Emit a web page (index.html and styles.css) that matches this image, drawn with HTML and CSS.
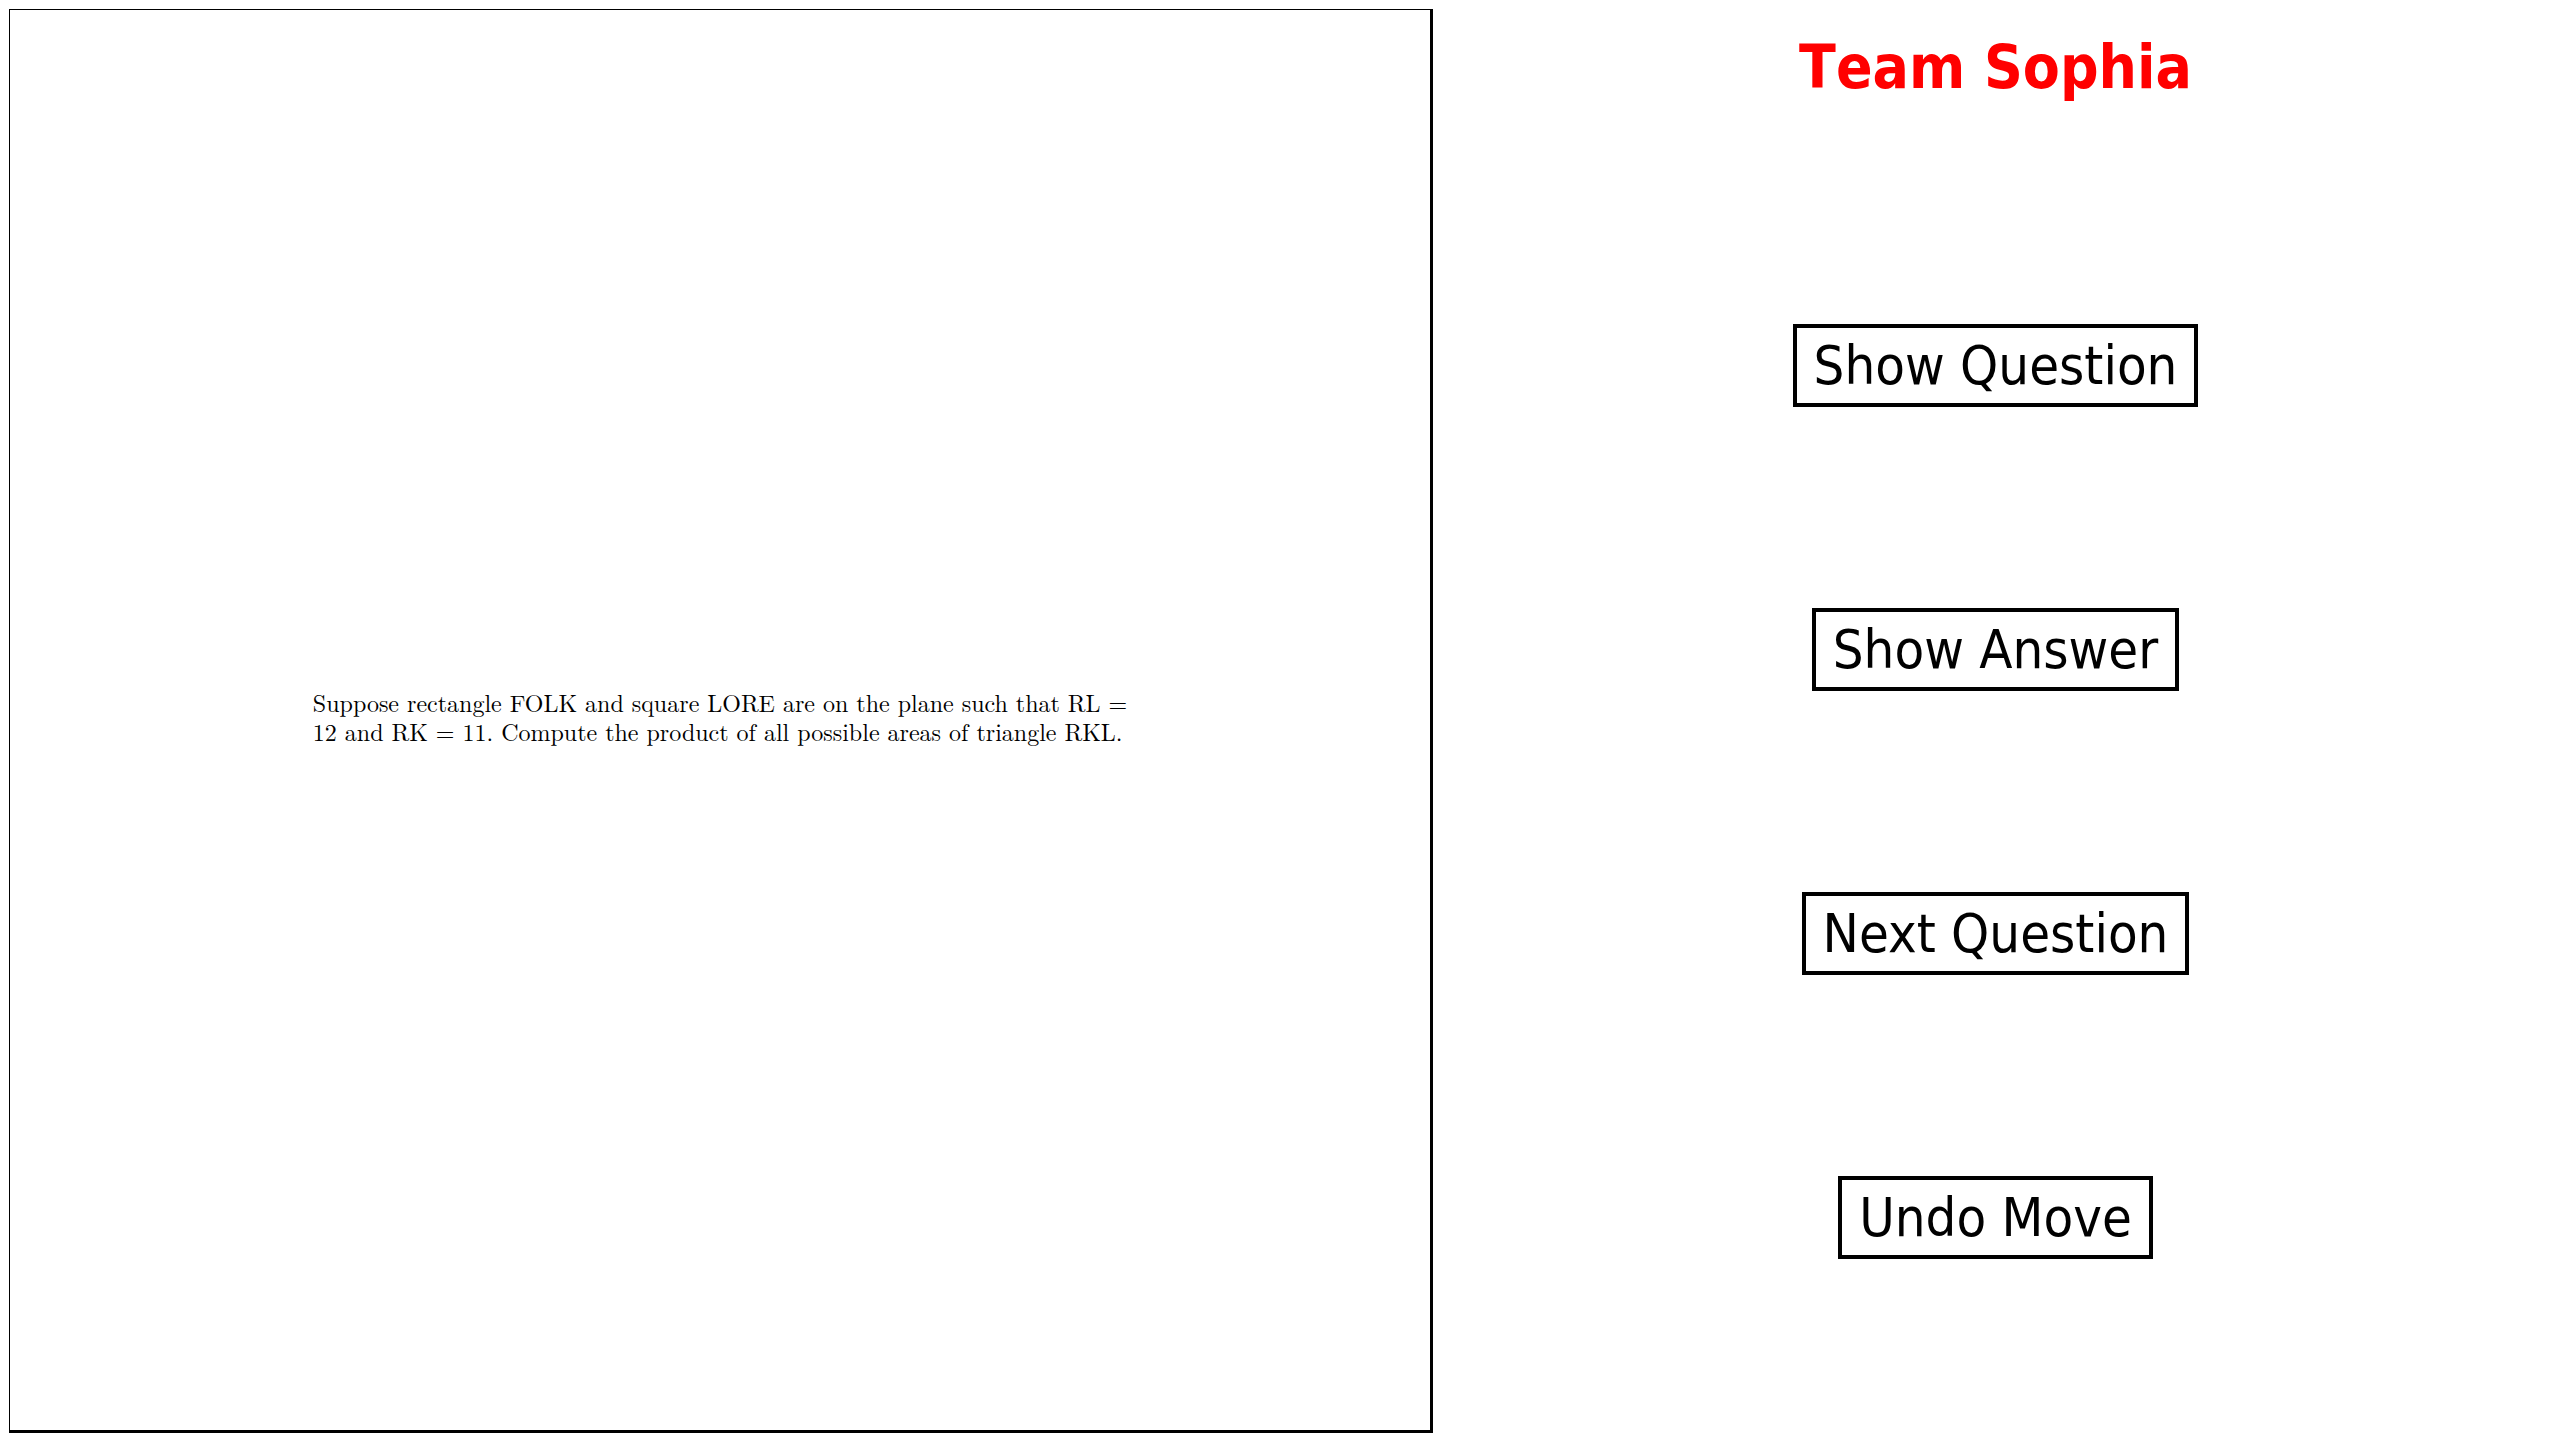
FILE: index.html
```html
<!DOCTYPE html>
<html lang="en">
<head>
<meta charset="utf-8">
<title>Team Sophia</title>
<link rel="stylesheet" href="styles.css">
</head>
<body>
<main class="layout">
  <section class="board">
    <p class="question">Suppose rectangle FOLK and square LORE are on the plane such that RL =<br>12 and RK = 11. Compute the product of all possible areas of triangle RKL.</p>
  </section>
  <aside class="controls">
    <h1 class="team">Team Sophia</h1>
    <div class="slot"><button class="action" type="button">Show Question</button></div>
    <div class="slot"><button class="action" type="button">Show Answer</button></div>
    <div class="slot"><button class="action" type="button">Next Question</button></div>
    <div class="slot"><button class="action" type="button">Undo Move</button></div>
  </aside>
</main>
</body>
</html>
```

FILE: styles.css
```css
* {
  box-sizing: border-box;
}

body {
  margin: 0;
  background: #fff;
  color: #000;
  font-family: "DejaVu Sans Condensed", "DejaVu Sans", sans-serif;
}

.layout {
  display: flex;
  height: 100vh;
}

.board {
  flex: none;
  height: calc(100vh - 16px);
  aspect-ratio: 1;
  margin: 9px;
  padding-bottom: 6px;
  border: solid #000;
  border-width: 1px 3px 3px 1px;
  display: flex;
  align-items: center;
  justify-content: center;
}

.question {
  margin: 0;
  font-family: "Latin Modern Roman", "CMU Serif", "Liberation Serif", serif;
  font-size: 24px;
  line-height: 29px;
  white-space: nowrap;
}

.controls {
  flex: 1;
  display: grid;
  grid-template-rows: repeat(5, 1fr);
  justify-items: center;
  padding: 10px 11px 10px 0;
}

.team {
  margin: 0;
  line-height: 114px;
  font-size: 60px;
  font-kerning: none;
  color: #f00;
}

.slot {
  padding-top: 30px;
}

.action {
  padding: 6px 17px;
  border: 4px solid #000;
  background: #fff;
  color: #000;
  font: inherit;
  font-size: 54px;
  line-height: 63px;
}
```
